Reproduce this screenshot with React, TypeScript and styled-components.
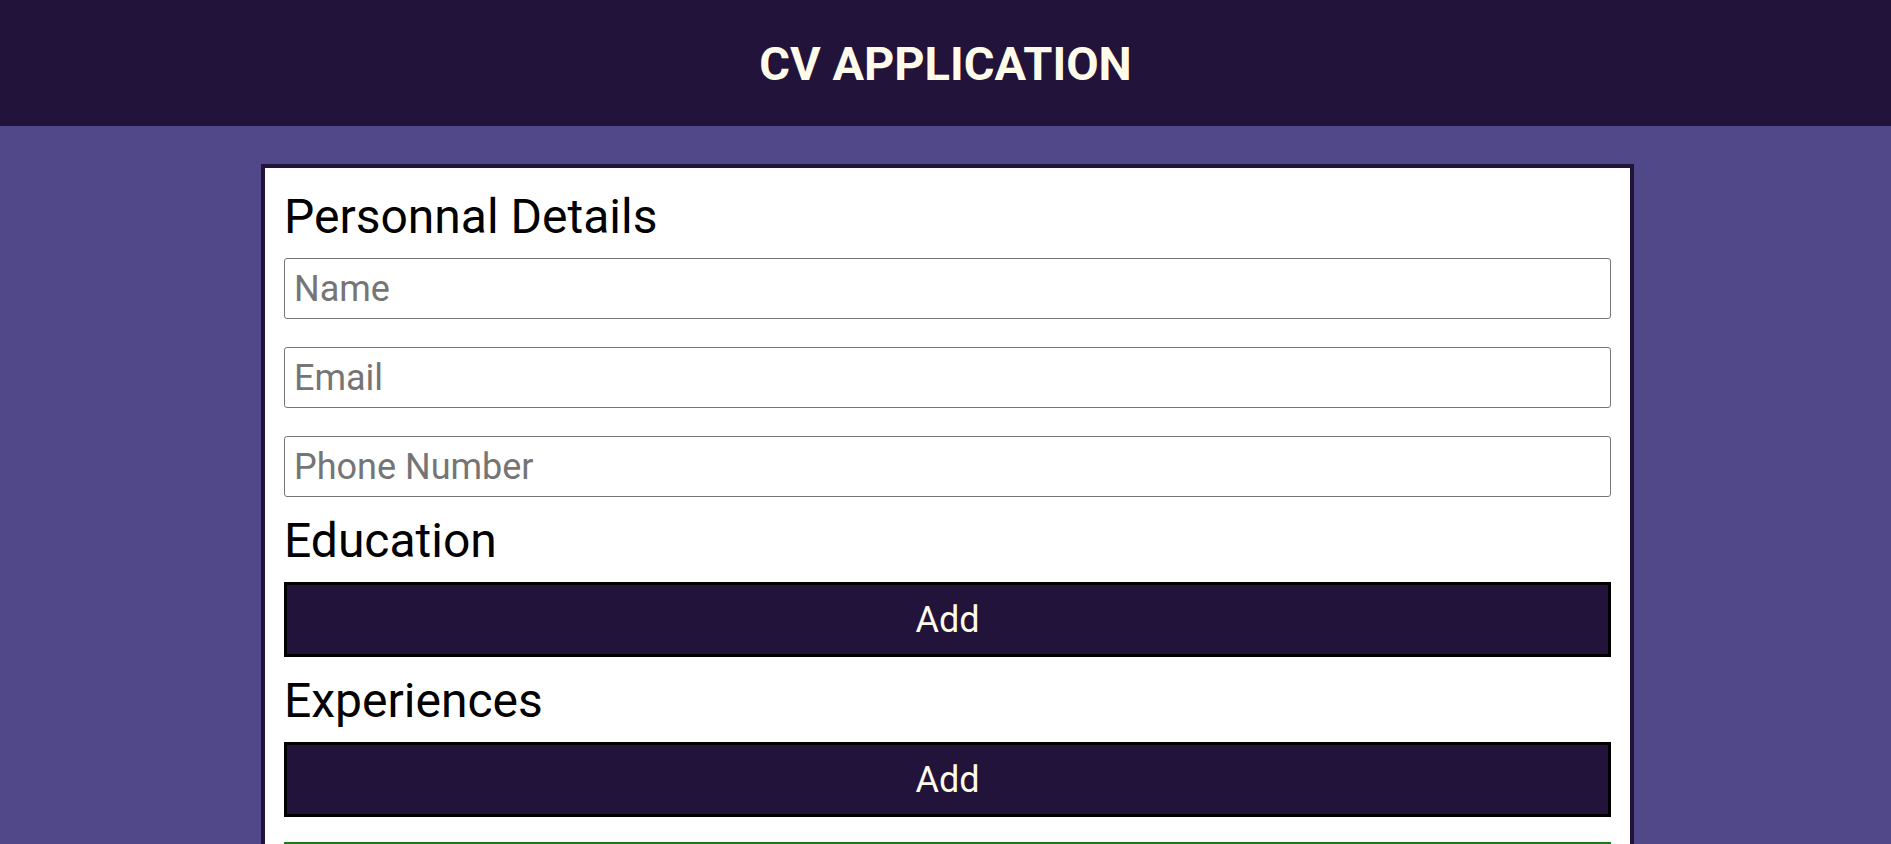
import React from "react";
import styled, { createGlobalStyle } from "styled-components";

const GlobalStyle = createGlobalStyle`
  html, body {
    margin: 0;
    padding: 0;
  }
  body {
    background: #514889;
    font-family: Roboto, "Liberation Sans", sans-serif;
  }
  * { box-sizing: border-box; }
`;

const Header = styled.header`
  height: 126px;
  background: #21133a;
  display: flex;
  align-items: center;
  justify-content: center;
`;

const Title = styled.h1`
  margin: 0;
  font-family: Roboto, sans-serif;
  font-weight: 700;
  font-size: 47px;
  line-height: normal;
  color: #fffbea;
`;

const Main = styled.main`
  padding: 38px 0 0 4px;
`;

const Card = styled.div`
  width: 1373px;
  margin: 0 auto;
  background: #ffffff;
  border: 4px solid #21133a;
  border-bottom: none;
  padding: 20px 19px 40px;
  display: flex;
  flex-direction: column;
  gap: 15px;
`;

const Section = styled.section`
  display: flex;
  flex-direction: column;
`;

const SectionTitle = styled.h2`
  margin: 0 0 13px;
  font-family: Roboto, sans-serif;
  font-weight: 400;
  font-size: 48px;
  line-height: normal;
  color: #000;
`;

const Fields = styled.div`
  display: flex;
  flex-direction: column;
  gap: 28px;
`;

const Input = styled.input`
  height: 61px;
  width: 100%;
  border: 1px solid #767676;
  border-radius: 3px;
  padding: 0 9px;
  font-family: Roboto, sans-serif;
  font-size: 36px;
  color: #000;
  background: #fff;
  &::placeholder {
    color: #757575;
  }
`;

const AddButton = styled.button`
  height: 75px;
  width: 100%;
  background: #21133a;
  border: 3px solid #000;
  color: #fffbea;
  font-family: Roboto, sans-serif;
  font-size: 36px;
  cursor: pointer;
`;

const SubmitButton = styled.button<{ $tone: string }>`
  margin-top: 10px;
  height: 90px;
  width: 100%;
  background: ${(p) => p.$tone};
  border: 2px solid #1f7a1f;
  color: #fffbea;
  font-family: Roboto, sans-serif;
  font-size: 36px;
`;

export default function App() {
  return (
    <>
      <GlobalStyle />
      <Header>
        <Title>CV APPLICATION</Title>
      </Header>
      <Main>
        <Card>
          <Section>
            <SectionTitle>Personnal Details</SectionTitle>
            <Fields>
              <Input type="text" placeholder="Name" />
              <Input type="email" placeholder="Email" />
              <Input type="tel" placeholder="Phone Number" />
            </Fields>
          </Section>
          <Section>
            <SectionTitle>Education</SectionTitle>
            <AddButton type="button">Add</AddButton>
          </Section>
          <Section>
            <SectionTitle>Experiences</SectionTitle>
            <AddButton type="button">Add</AddButton>
          </Section>
          <SubmitButton type="button" $tone="#2e8b2e">
            Submit
          </SubmitButton>
        </Card>
      </Main>
    </>
  );
}
